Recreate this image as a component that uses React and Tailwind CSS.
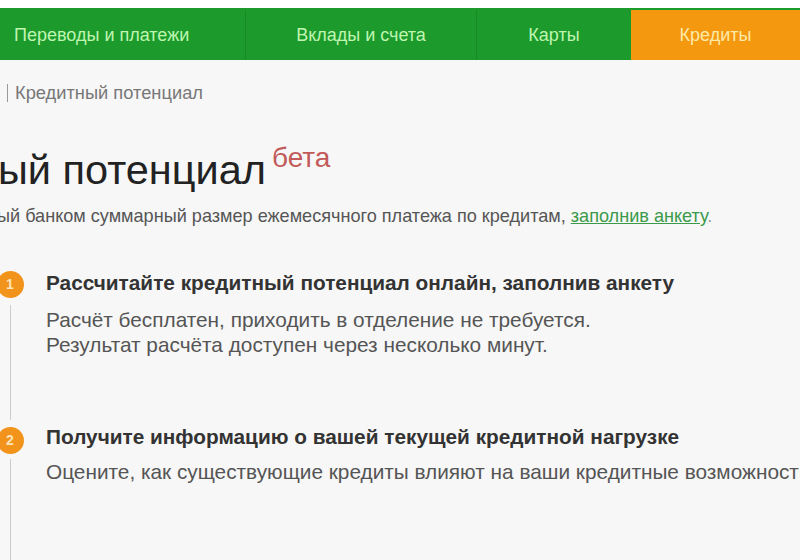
const navItems = [
  { label: "Переводы и платежи", width: "w-[245px]", align: "justify-start pl-[14px]" },
  { label: "Вклады и счета", width: "w-[231px]", align: "justify-center" },
  { label: "Карты", width: "w-[155px]", align: "justify-center" }
];

function StepBadge({ n }) {
  return (
    <div className="flex h-[27px] w-[27px] shrink-0 items-center justify-center rounded-full bg-[#f2931c] text-[14px] font-bold text-[#fde3b8]">
      {n}
    </div>
  );
}

export default function App() {
  return (
    <div
      className="h-[560px] w-[800px] overflow-hidden bg-[#f7f7f7] text-[#333]"
      style={{ fontFamily: '"Liberation Sans", Arial, sans-serif' }}
    >
      <div className="h-[8px] bg-white" />
      <nav className="flex h-[52px] bg-[#1c9a2b] pt-[2px] text-[18px]">
        {navItems.map((item, i) => (
          <div
            key={item.label}
            className={`flex items-center ${item.width} ${item.align} ${i > 0 ? "border-l border-[#178a25]" : ""} text-[#bff5b0]`}
          >
            {item.label}
          </div>
        ))}
        <div className="flex flex-1 items-center justify-center bg-[#f4980f] text-[#fde9a8]">Кредиты</div>
      </nav>

      <div className="flex items-center gap-[7px] pl-[7px] pt-[23px] text-[18.3px] leading-[20px] text-[#777]">
        <span className="h-[18px] w-px bg-[#999]" />
        <span>Кредитный потенциал</span>
      </div>

      <div className="mt-[43px] flex items-start -ml-[2px]">
        <h1 className="text-[41.5px] leading-[48px] text-[#222]">ый потенциал</h1>
        <span className="ml-[6px] -mt-[4px] text-[28px] leading-[32px] text-[#c25a5a]">бета</span>
      </div>

      <p className="mt-[11px] -ml-[3px] whitespace-nowrap text-[18.1px] leading-[22px] text-[#555]">
        ый банком суммарный размер ежемесячного платежа по кредитам,{" "}
        <a className="text-[#3a9a4a] underline decoration-[#3a9a4a]">заполнив анкету</a>
        <span className="text-[#999]">.</span>
      </p>

      <div className="mt-[42px] flex -ml-[3px]">
        <div className="flex w-[26px] flex-col items-center">
          <div className="mt-[2px]">
            <StepBadge n="1" />
          </div>
          <div className="mt-[7px] h-[115px] w-px bg-[#ccc]" />
          <div className="mt-[7px]">
            <StepBadge n="2" />
          </div>
          <div className="mt-[5px] h-[120px] w-px bg-[#ccc]" />
        </div>
        <div className="ml-[23px] flex flex-col">
          <h2 className="whitespace-nowrap text-[20.8px] font-bold leading-[28px] text-[#333]">
            Рассчитайте кредитный потенциал онлайн, заполнив анкету
          </h2>
          <p className="mt-[10px] whitespace-nowrap text-[20.8px] leading-[25px] text-[#555]">
            Расчёт бесплатен, приходить в отделение не требуется.
            <br />
            Результат расчёта доступен через несколько минут.
          </p>
          <h2 className="mt-[66px] whitespace-nowrap text-[20.8px] font-bold leading-[28px] text-[#333]">
            Получите информацию о вашей текущей кредитной нагрузке
          </h2>
          <p className="mt-[8px] whitespace-nowrap text-[20.8px] leading-[25px] text-[#555]">
            Оцените, как существующие кредиты влияют на ваши кредитные возможности
          </p>
        </div>
      </div>
    </div>
  );
}
